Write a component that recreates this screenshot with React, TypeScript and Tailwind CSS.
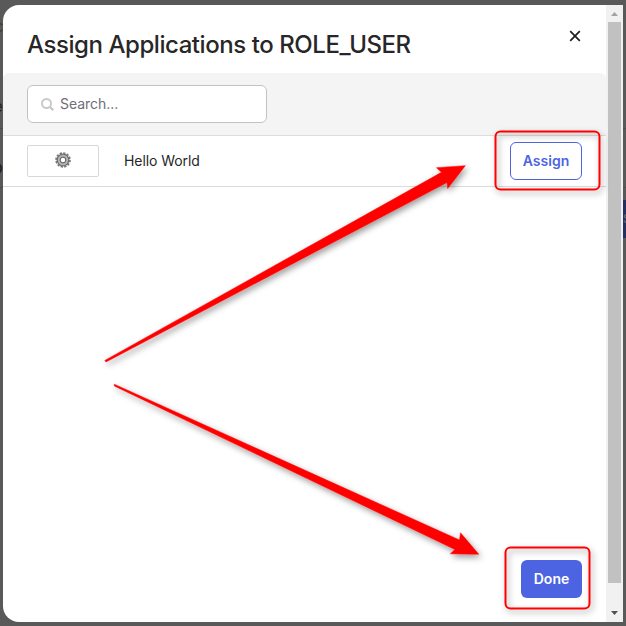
const font = "font-['Inter','Liberation_Sans',sans-serif]";

function Gear() {
  return (
    <svg width="16" height="16" viewBox="-8 -8 16 16" className="block">
      <circle r="7" fill="none" stroke="#77777c" strokeWidth="1.6" strokeDasharray="2.3 1.365" />
      <circle r="5.8" fill="#b8b8b8" stroke="#6c6c6c" strokeWidth="1.3" />
      <circle r="2.8" fill="#fff" stroke="#6c6c6c" strokeWidth="1.2" />
    </svg>
  );
}

function ScrollBar() {
  return (
    <div className="flex w-[17px] shrink-0 flex-col items-center bg-[#f1f1f1]">
      <svg width="17" height="17" viewBox="0 0 17 17" className="block shrink-0">
        <path d="M5 11 L8.5 7 L12 11Z" fill="#a3a3a3" />
      </svg>
      <div className="h-[561px] w-[13px] bg-[#c1c1c1]" />
      <div className="flex-1" />
      <svg width="17" height="17" viewBox="0 0 17 17" className="block shrink-0">
        <path d="M5 6 L8.5 10 L12 6Z" fill="#505050" />
      </svg>
    </div>
  );
}

function Annotations() {
  return (
    <svg width="626" height="626" viewBox="0 0 626 626" className="pointer-events-none absolute left-0 top-0">
      <defs>
        <filter id="shade" x="-20%" y="-20%" width="140%" height="140%">
          <feDropShadow dx="2" dy="3" stdDeviation="3" floodColor="#000" floodOpacity="0.4" />
        </filter>
      </defs>
      <g filter="url(#shade)" fill="#f00" stroke="#f00" strokeWidth="0.5" strokeLinejoin="round">
        <path d="M104.8 360.4 L441.5 172.3 L436.5 167.7 L465.3 165.7 L447.7 188.6 L447 182.5 L106 362Z" />
        <path d="M114.3 384.2 L459.5 540 L460.5 532.7 L478.8 554.3 L450.3 553.8 L455 549.5 L114.3 386Z" />
      </g>
      <g filter="url(#shade)" fill="none" stroke="#f00" strokeWidth="2">
        <rect x="495.5" y="131.5" width="104" height="58" rx="5" />
        <rect x="505.5" y="547.5" width="84" height="61" rx="5" />
      </g>
    </svg>
  );
}

export default function App() {
  return (
    <div className={`relative h-[626px] w-[626px] overflow-hidden bg-[#595959] ${font}`}>
      <div className="absolute left-0 top-0 h-[626px] w-[3px] overflow-hidden text-[15px] text-[#222]">
        <span className="absolute -left-[5px] top-[16px] text-[#473c2b]">c</span>
        <span className="absolute -left-[6px] top-[96px]">e</span>
        <div className="absolute top-[128px] h-px w-[3px] bg-[#4c4c4c]" />
        <span className="absolute -left-[9px] top-[152px] text-[20px]">o</span>
        <div className="absolute top-[187px] h-px w-[3px] bg-[#4c4c4c]" />
      </div>
      <div className="absolute left-[623px] top-0 h-[626px] w-[3px] overflow-hidden">
        <div className="absolute top-[128px] h-px w-[3px] bg-[#4c4c4c]" />
        <div className="absolute top-[187px] h-px w-[3px] bg-[#4c4c4c]" />
        <div className="absolute top-[200px] h-[38px] w-[3px] bg-[#25305e]" />
        <span className="absolute left-0 top-[211px] text-xs text-[#707070]">S</span>
      </div>
      <div className="pl-[3px] pt-[5px]">
        <main className="flex h-[617px] w-[620px] overflow-hidden rounded-l-[16px] bg-white">
          <div className="flex w-[603px] flex-col">
            <header className="flex h-[68px] shrink-0 items-start justify-between pl-6 pr-[25px]">
              <h1 className="mt-[24px] whitespace-nowrap text-[24px] font-medium leading-[32px] tracking-[-0.44px] text-[#272727] [font-feature-settings:'calt'_0]">Assign Applications to ROLE_USER</h1>
              <svg width="12" height="12" viewBox="0 0 12 12" className="mt-[25px]">
                <path d="M1.2 1.2 L10.8 10.8 M10.8 1.2 L1.2 10.8" stroke="#1d1d21" strokeWidth="1.7" />
              </svg>
            </header>
            <div className="flex h-[63px] shrink-0 items-start rounded-t-[6px] border-b border-[#dcdcdc] bg-[#f4f4f4] pl-6 pt-3">
              <div className="flex h-[38px] w-[240px] items-center rounded-[6px] border border-[#c1c1c8] bg-white pl-[13px]">
                <svg width="13" height="13" viewBox="0 0 13 13" className="mr-[6px]">
                  <circle cx="5.5" cy="5.5" r="4.5" fill="none" stroke="#c9c9c9" strokeWidth="2" />
                  <path d="M9 9 L12.2 12.2" stroke="#c9c9c9" strokeWidth="2.4" />
                </svg>
                <span className="pb-px text-[14px] tracking-[-0.04px] text-[#6e6e78]">Search...</span>
              </div>
            </div>
            <div className="flex h-[51px] shrink-0 items-center border-b border-[#dcdcdc] pl-6 pr-6">
              <div className="flex h-8 w-[72px] items-center justify-center rounded-[2px] border border-[#d7d7dc] pb-[2px]">
                <Gear />
              </div>
              <span className="ml-[25px] flex-1 pb-px text-[14px] tracking-[-0.08px] text-[#272727]">Hello World</span>
              <button className="h-[38px] w-[72px] rounded-[6px] border border-[#4c64e1] bg-white pb-[2px] text-[14px] font-semibold text-[#4c64e1]">Assign</button>
            </div>
            <div className="flex flex-1 items-end justify-end pb-6 pr-6">
              <button className="h-[38px] w-[61px] rounded-[6px] bg-[#4c64e1] pb-[2px] text-[14px] font-semibold text-white">Done</button>
            </div>
          </div>
          <ScrollBar />
        </main>
      </div>
      <Annotations />
    </div>
  );
}
